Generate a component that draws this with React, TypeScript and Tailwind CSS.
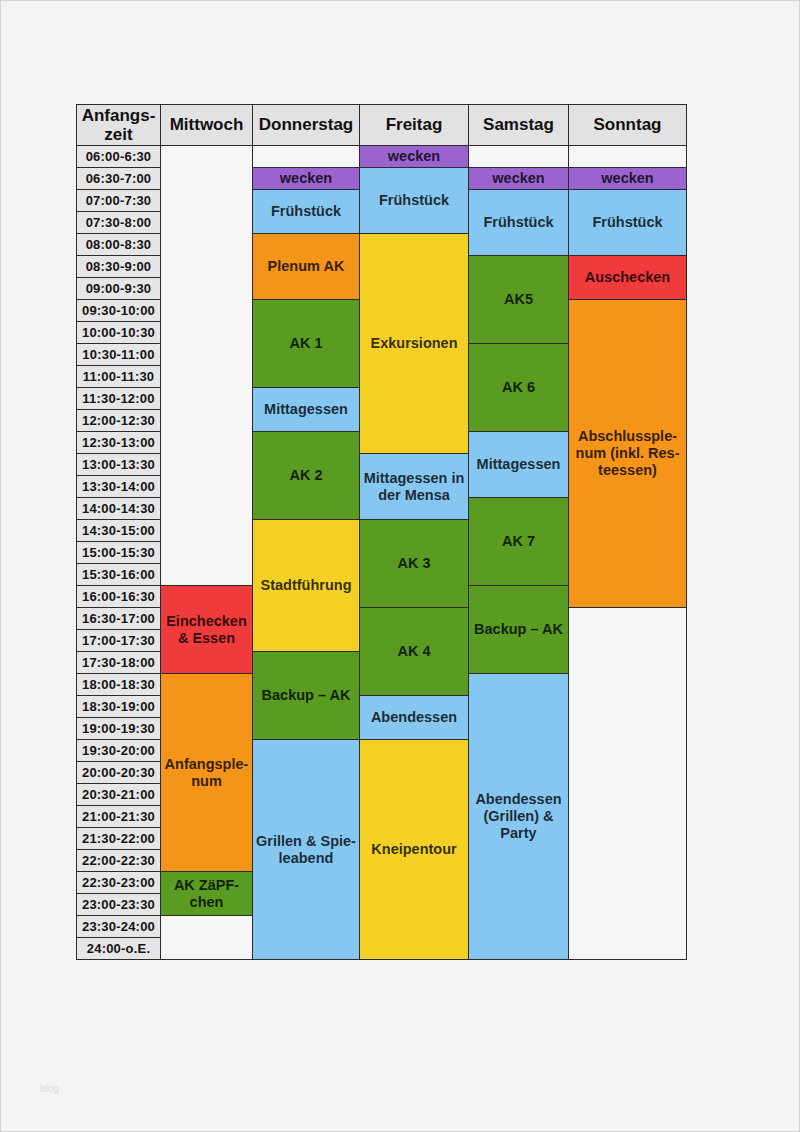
type Block = { span: number; label?: string; color?: string };

const ROW = 22;

const times = [
  '06:00-6:30', '06:30-7:00', '07:00-7:30', '07:30-8:00', '08:00-8:30', '08:30-9:00',
  '09:00-9:30', '09:30-10:00', '10:00-10:30', '10:30-11:00', '11:00-11:30', '11:30-12:00',
  '12:00-12:30', '12:30-13:00', '13:00-13:30', '13:30-14:00', '14:00-14:30', '14:30-15:00',
  '15:00-15:30', '15:30-16:00', '16:00-16:30', '16:30-17:00', '17:00-17:30', '17:30-18:00',
  '18:00-18:30', '18:30-19:00', '19:00-19:30', '19:30-20:00', '20:00-20:30', '20:30-21:00',
  '21:00-21:30', '21:30-22:00', '22:00-22:30', '22:30-23:00', '23:00-23:30', '23:30-24:00',
  '24:00-o.E.',
];

const purple = 'bg-[#9b63cf]';
const blue = 'bg-[#86c7f2]';
const orange = 'bg-[#f49419]';
const green = 'bg-[#5a9b22]';
const yellow = 'bg-[#f5d024]';
const red = 'bg-[#ef3b3b]';

const days: { name: string; blocks: Block[] }[] = [
  {
    name: 'Mittwoch',
    blocks: [
      { span: 20 },
      { span: 4, label: 'Einchecken\n& Essen', color: red },
      { span: 9, label: 'Anfangsple-\nnum', color: orange },
      { span: 2, label: 'AK ZäPF-\nchen', color: green },
      { span: 2 },
    ],
  },
  {
    name: 'Donnerstag',
    blocks: [
      { span: 1 },
      { span: 1, label: 'wecken', color: purple },
      { span: 2, label: 'Frühstück', color: blue },
      { span: 3, label: 'Plenum AK', color: orange },
      { span: 4, label: 'AK 1', color: green },
      { span: 2, label: 'Mittagessen', color: blue },
      { span: 4, label: 'AK 2', color: green },
      { span: 6, label: 'Stadtführung', color: yellow },
      { span: 4, label: 'Backup – AK', color: green },
      { span: 10, label: 'Grillen & Spie-\nleabend', color: blue },
    ],
  },
  {
    name: 'Freitag',
    blocks: [
      { span: 1, label: 'wecken', color: purple },
      { span: 3, label: 'Frühstück', color: blue },
      { span: 10, label: 'Exkursionen', color: yellow },
      { span: 3, label: 'Mittagessen in\nder Mensa', color: blue },
      { span: 4, label: 'AK 3', color: green },
      { span: 4, label: 'AK 4', color: green },
      { span: 2, label: 'Abendessen', color: blue },
      { span: 10, label: 'Kneipentour', color: yellow },
    ],
  },
  {
    name: 'Samstag',
    blocks: [
      { span: 1 },
      { span: 1, label: 'wecken', color: purple },
      { span: 3, label: 'Frühstück', color: blue },
      { span: 4, label: 'AK5', color: green },
      { span: 4, label: 'AK 6', color: green },
      { span: 3, label: 'Mittagessen', color: blue },
      { span: 4, label: 'AK 7', color: green },
      { span: 4, label: 'Backup – AK', color: green },
      { span: 13, label: 'Abendessen\n(Grillen) &\nParty', color: blue },
    ],
  },
  {
    name: 'Sonntag',
    blocks: [
      { span: 1 },
      { span: 1, label: 'wecken', color: purple },
      { span: 3, label: 'Frühstück', color: blue },
      { span: 2, label: 'Auschecken', color: red },
      { span: 14, label: 'Abschlussple-\nnum (inkl. Res-\nteessen)', color: orange },
      { span: 16 },
    ],
  },
];

const widths = ['w-[92px]', 'w-[107px]', 'w-[109px]', 'w-[100px]', 'w-[118px]'];

export default function App() {
  return (
    <div className="w-[800px] h-[1132px] bg-[#f4f4f4] border border-[#d4d4d4] relative font-['Liberation_Sans',Arial,sans-serif]">
      <div className="pt-[103px] pl-[75px]">
        <div className="flex border-l border-t border-[#2b2b2b] w-fit">
          <div className="w-[84px] flex flex-col">
            <div className="h-[41px] bg-[#e2e2e2] border-r border-b border-[#2b2b2b] flex items-center justify-center text-center text-[17px] leading-[19px] font-bold text-[#111]">
              Anfangs-
              <br />
              zeit
            </div>
            {times.map((t) => (
              <div
                key={t}
                className="h-[22px] bg-[#e6e6e6] border-r border-b border-[#2b2b2b] flex items-center justify-center text-[13px] font-bold text-[#141414] tracking-[0.2px]"
              >
                {t}
              </div>
            ))}
          </div>
          {days.map((d, i) => (
            <div key={d.name} className={`${widths[i]} flex flex-col`}>
              <div className="h-[41px] bg-[#e2e2e2] border-r border-b border-[#2b2b2b] flex items-center justify-center text-[17px] font-bold text-[#111]">
                {d.name}
              </div>
              {d.blocks.map((b, j) => (
                <div
                  key={j}
                  style={{ height: b.span * ROW }}
                  className={`${b.color ?? 'bg-[#f6f6f6]'} border-r border-b border-[#2b2b2b] flex items-center justify-center text-center whitespace-pre-line text-[14.5px] leading-[17px] font-bold text-black/80`}
                >
                  {b.label}
                </div>
              ))}
            </div>
          ))}
        </div>
      </div>
      <div className="absolute left-[39px] top-[1080px] text-[10px] text-[#dcdcdc]">blog</div>
    </div>
  );
}
